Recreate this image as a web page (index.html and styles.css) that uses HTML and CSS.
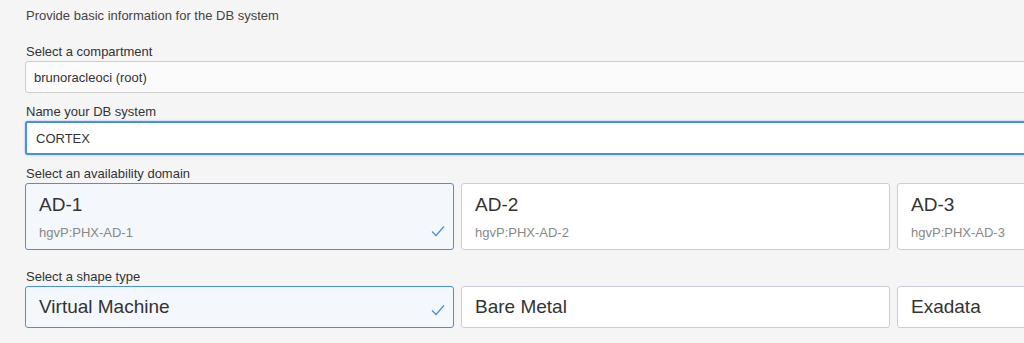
FILE: index.html
```html
<!DOCTYPE html>
<html lang="en">
  <head>
    <meta charset="UTF-8" />
    <title>Create DB System</title>
    <link rel="stylesheet" href="styles.css">
  </head>
  <body>
    <div class="form">
      <p class="intro">Provide basic information for the DB system</p>

      <div class="field">
        <label class="label">Select a compartment</label>
        <div class="input readonly">brunoracleoci (root)</div>
      </div>

      <div class="field">
        <label class="label">Name your DB system</label>
        <div class="input focused">CORTEX</div>
      </div>

      <div class="field field-cards">
        <label class="label">Select an availability domain</label>
        <div class="cards">
          <div class="card card-tall selected">
            <div class="card-title">AD-1</div>
            <div class="card-sub">hgvP:PHX-AD-1</div>
            <svg class="check" width="14" height="12" viewBox="0 0 14 12">
              <path d="M1 6.5 L5 10.5 L13 1.5" fill="none" stroke="#4a90d9" stroke-width="1.3" />
            </svg>
          </div>
          <div class="card card-tall">
            <div class="card-title">AD-2</div>
            <div class="card-sub">hgvP:PHX-AD-2</div>
          </div>
          <div class="card card-tall">
            <div class="card-title">AD-3</div>
            <div class="card-sub">hgvP:PHX-AD-3</div>
          </div>
        </div>
      </div>

      <div class="field">
        <label class="label">Select a shape type</label>
        <div class="cards">
          <div class="card card-short selected">
            <div class="card-title">Virtual Machine</div>
            <svg class="check check-short" width="14" height="12" viewBox="0 0 14 12">
              <path d="M1 6.5 L5 10.5 L13 1.5" fill="none" stroke="#4a90d9" stroke-width="1.3" />
            </svg>
          </div>
          <div class="card card-short">
            <div class="card-title">Bare Metal</div>
          </div>
          <div class="card card-short">
            <div class="card-title">Exadata</div>
          </div>
        </div>
      </div>
    </div>
  </body>
</html>
```

FILE: styles.css
```css
body {
  margin: 0;
  background-color: #f5f5f5;
  font-family: "Liberation Sans", Arial, sans-serif;
  color: #333;
  overflow: hidden;
}

.form {
  padding: 8px 0 0 25px;
  width: 1400px;
}

.intro {
  margin: 0 0 21px 1px;
  font-size: 13px;
  line-height: 15px;
  color: #444;
}

.field {
  margin-bottom: 11px;
}

.field-cards {
  margin-bottom: 19px;
}

.label {
  display: block;
  margin: 0 0 2px 1px;
  font-size: 13px;
  line-height: 15px;
  color: #333;
}

.input {
  box-sizing: border-box;
  height: 32px;
  padding: 0 8px;
  display: flex;
  align-items: center;
  font-size: 13px;
  color: #333;
  border: 1px solid #cdcdcd;
  border-radius: 3px;
  background: #fff;
}

.input.readonly {
  background: #fbfbfb;
}

.input.focused {
  height: 34px;
  padding: 0 9px;
  border: 2px solid #4a90e2;
  box-shadow: 0 0 2px rgba(74, 144, 226, 0.6);
}

.cards {
  display: grid;
  grid-template-columns: repeat(3, 429px);
  gap: 7px;
}

.card {
  position: relative;
  box-sizing: border-box;
  padding: 0 13px;
  background: #fff;
  border: 1px solid #c9ced6;
  border-radius: 3px;
}

.card.selected {
  background: #f4f7fb;
  border-color: #4a90e2;
}

.card-tall {
  height: 67px;
  padding-top: 10px;
}

.card-short {
  height: 42px;
  display: flex;
  align-items: center;
}

.card-title {
  font-size: 19px;
  line-height: 22px;
  color: #333;
}

.card-sub {
  margin-top: 9px;
  font-size: 13px;
  line-height: 15px;
  color: #888;
}

.check {
  position: absolute;
  right: 8px;
  bottom: 12px;
}

.check-short {
  bottom: 11px;
}
```
